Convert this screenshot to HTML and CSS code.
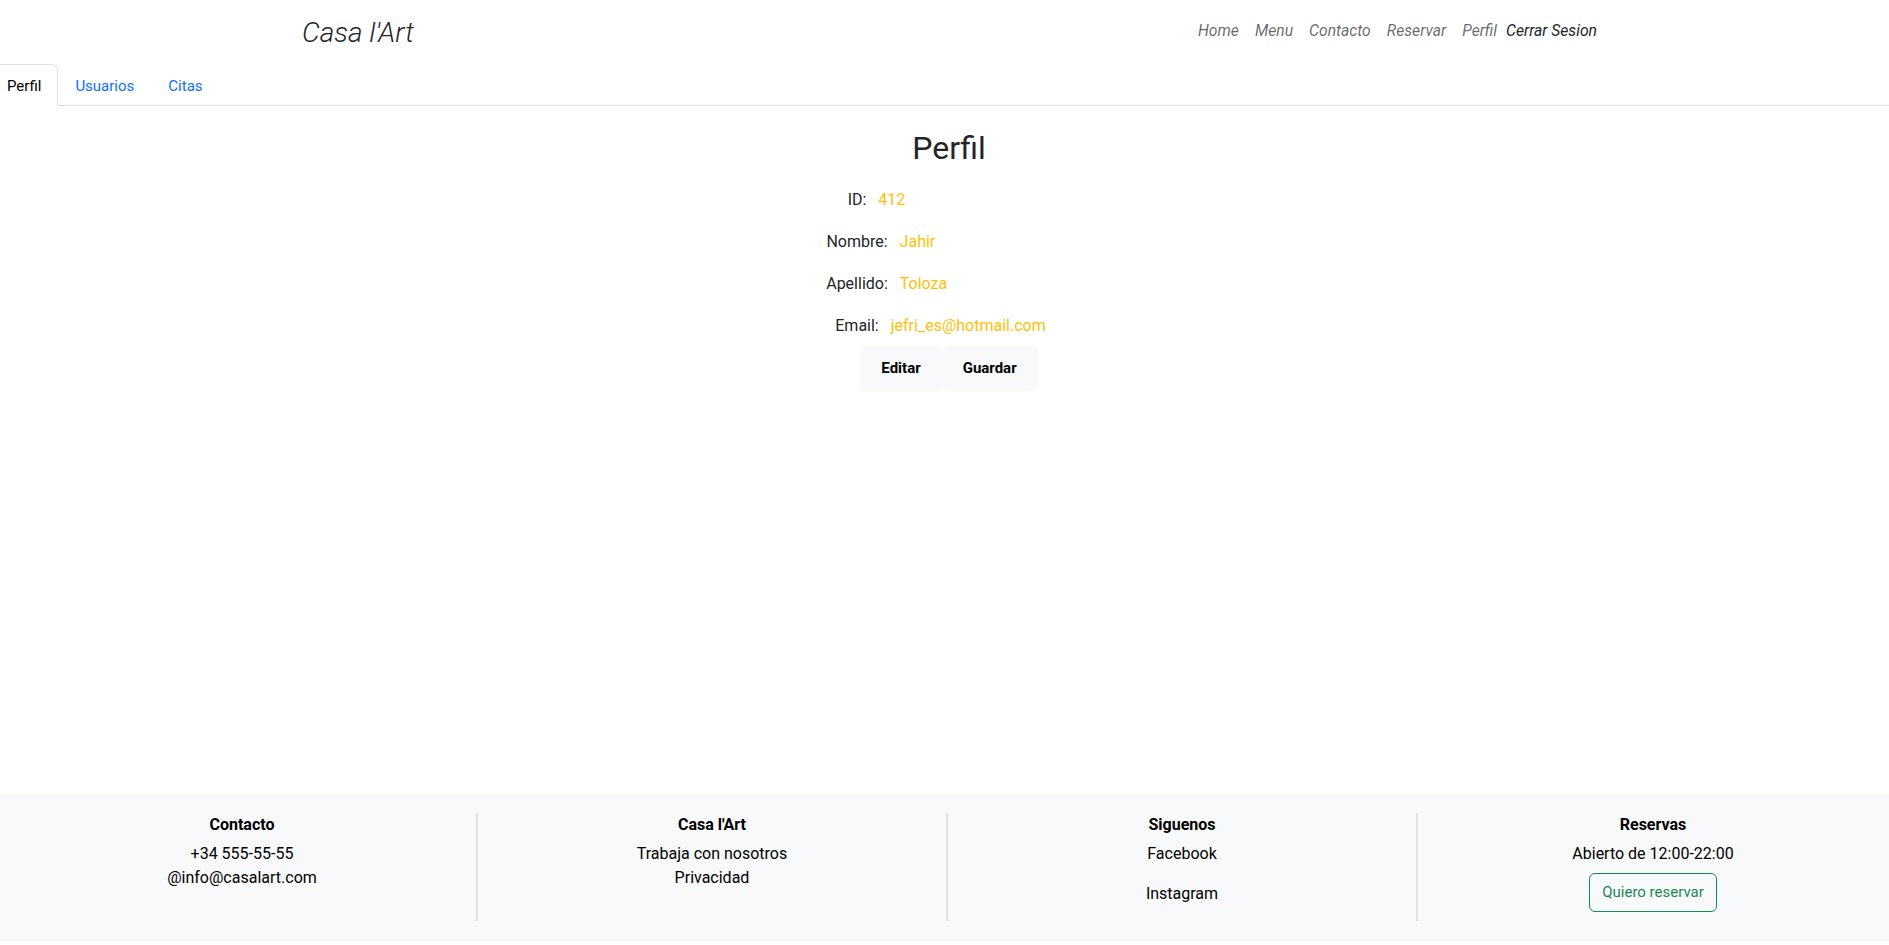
FILE: index.html
```html
<!DOCTYPE html>
<html lang="es">
<head>
<meta charset="utf-8">
<title>Casa l'Art - Perfil</title>
<link rel="stylesheet" href="styles.css">
</head>
<body>
<header class="topbar">
  <div class="topbar-inner">
    <span class="brand">Casa l'Art</span>
    <nav class="mainnav">
      <a class="nav-link" href="#">Home</a>
      <a class="nav-link" href="#">Menu</a>
      <a class="nav-link" href="#">Contacto</a>
      <a class="nav-link" href="#">Reservar</a>
      <a class="nav-link" href="#">Perfil</a>
      <a class="nav-logout" href="#">Cerrar Sesion</a>
    </nav>
  </div>
</header>

<ul class="tabs">
  <li><a class="tab tab-active" href="#">Perfil</a></li>
  <li><a class="tab" href="#">Usuarios</a></li>
  <li><a class="tab" href="#">Citas</a></li>
</ul>

<main class="profile">
  <h2 class="profile-title">Perfil</h2>
  <div class="field"><span class="field-label">ID:</span><span class="field-value">412</span></div>
  <div class="field"><span class="field-label">Nombre:</span><span class="field-value">Jahir</span></div>
  <div class="field"><span class="field-label">Apellido:</span><span class="field-value">Toloza</span></div>
  <div class="field"><span class="field-label">Email:</span><span class="field-value">jefri_es@hotmail.com</span></div>
  <div class="actions">
    <button class="btn-light" type="button">Editar</button>
    <button class="btn-light" type="button">Guardar</button>
  </div>
</main>

<footer class="footer">
  <div class="footer-col">
    <div class="footer-title">Contacto</div>
    <div class="footer-line">+34 555-55-55</div>
    <div class="footer-line">@info@casalart.com</div>
  </div>
  <div class="footer-col">
    <div class="footer-title">Casa l'Art</div>
    <div class="footer-line">Trabaja con nosotros</div>
    <div class="footer-line">Privacidad</div>
  </div>
  <div class="footer-col">
    <div class="footer-title">Siguenos</div>
    <div class="footer-line">Facebook</div>
    <div class="footer-line footer-gap">Instagram</div>
  </div>
  <div class="footer-col footer-col-last">
    <div class="footer-title">Reservas</div>
    <div class="footer-line">Abierto de 12:00-22:00</div>
    <button class="btn-outline-success" type="button">Quiero reservar</button>
  </div>
</footer>
</body>
</html>
```

FILE: styles.css
```css
html, body {
  height: 100%;
}

body {
  margin: 0;
  display: flex;
  flex-direction: column;
  font-family: Roboto, "Liberation Sans", sans-serif;
  font-size: 16px;
  line-height: 24px;
  color: #212529;
  background: #fff;
  overflow: hidden;
}

a {
  text-decoration: none;
}

/* Header */
.topbar {
  height: 64px;
  padding-left: 10px;
  flex-shrink: 0;
}

.topbar-inner {
  width: 1295px;
  height: 64px;
  margin: 0 auto;
  display: flex;
  align-items: center;
  justify-content: space-between;
}

.brand {
  font-size: 28px;
  font-weight: 300;
  font-style: italic;
  line-height: 34px;
  color: #212529;
  margin-top: 2px;
}

.mainnav {
  display: flex;
  align-items: center;
  margin-top: -2px;
  font-size: 15.7px;
}

.nav-link {
  font-style: italic;
  color: rgba(0, 0, 0, 0.6);
  padding: 0 8px;
}

.nav-logout {
  font-style: italic;
  color: #212529;
  padding-left: 1px;
}

/* Tabs */
.tabs {
  list-style: none;
  margin: 0 0 0 -10px;
  padding: 0;
  display: flex;
  border-bottom: 1px solid #dee2e6;
  flex-shrink: 0;
}

.tab {
  display: block;
  padding: 9px 16px 7px;
  margin-bottom: -1px;
  border: 1px solid transparent;
  border-radius: 6px 6px 0 0;
  font-size: 15px;
  color: #0d6efd;
}

.tab-active {
  color: #000;
  background: #fff;
  border-color: #dee2e6 #dee2e6 #fff;
}

/* Profile */
.profile {
  flex: 1;
  padding: 23px 0 0 9px;
  display: flex;
  flex-direction: column;
  align-items: center;
}

.profile-title {
  margin: 0 0 21px;
  font-size: 32px;
  font-weight: 400;
  line-height: 38.4px;
  color: #212529;
}

.field {
  display: flex;
  height: 24px;
  margin-bottom: 18px;
}

.field-label {
  margin-right: 12px;
}

.field-value {
  width: 172px;
  color: #ffc107;
}

.actions {
  display: flex;
  margin-top: -10px;
}

.btn-light {
  font-family: Roboto, "Liberation Sans", sans-serif;
  font-size: 15px;
  font-weight: 700;
  line-height: 21px;
  padding: 11px 20px;
  border: 1px solid #f8f9fa;
  border-radius: 6px;
  background: #f8f9fa;
  color: #000;
}

/* Footer */
.footer {
  flex-shrink: 0;
  height: 147px;
  box-sizing: border-box;
  margin-bottom: 4px;
  padding: 19px 1px 20px 8px;
  background: #f8f9fa;
  display: grid;
  grid-template-columns: repeat(4, 1fr);
  color: #000;
}

.footer-col {
  text-align: center;
  border-right: 2px solid #dee2e6;
  display: flex;
  flex-direction: column;
  align-items: center;
}

.footer-col-last {
  border-right: none;
}

.footer-title {
  font-weight: 700;
  margin-bottom: 5px;
}

.footer-gap {
  margin-top: 16px;
}

.btn-outline-success {
  margin-top: 7px;
  font-family: Roboto, "Liberation Sans", sans-serif;
  font-size: 15px;
  line-height: 24px;
  padding: 6px 12px 7px;
  border: 1px solid #198754;
  border-radius: 6px;
  background: transparent;
  color: #198754;
}
```
